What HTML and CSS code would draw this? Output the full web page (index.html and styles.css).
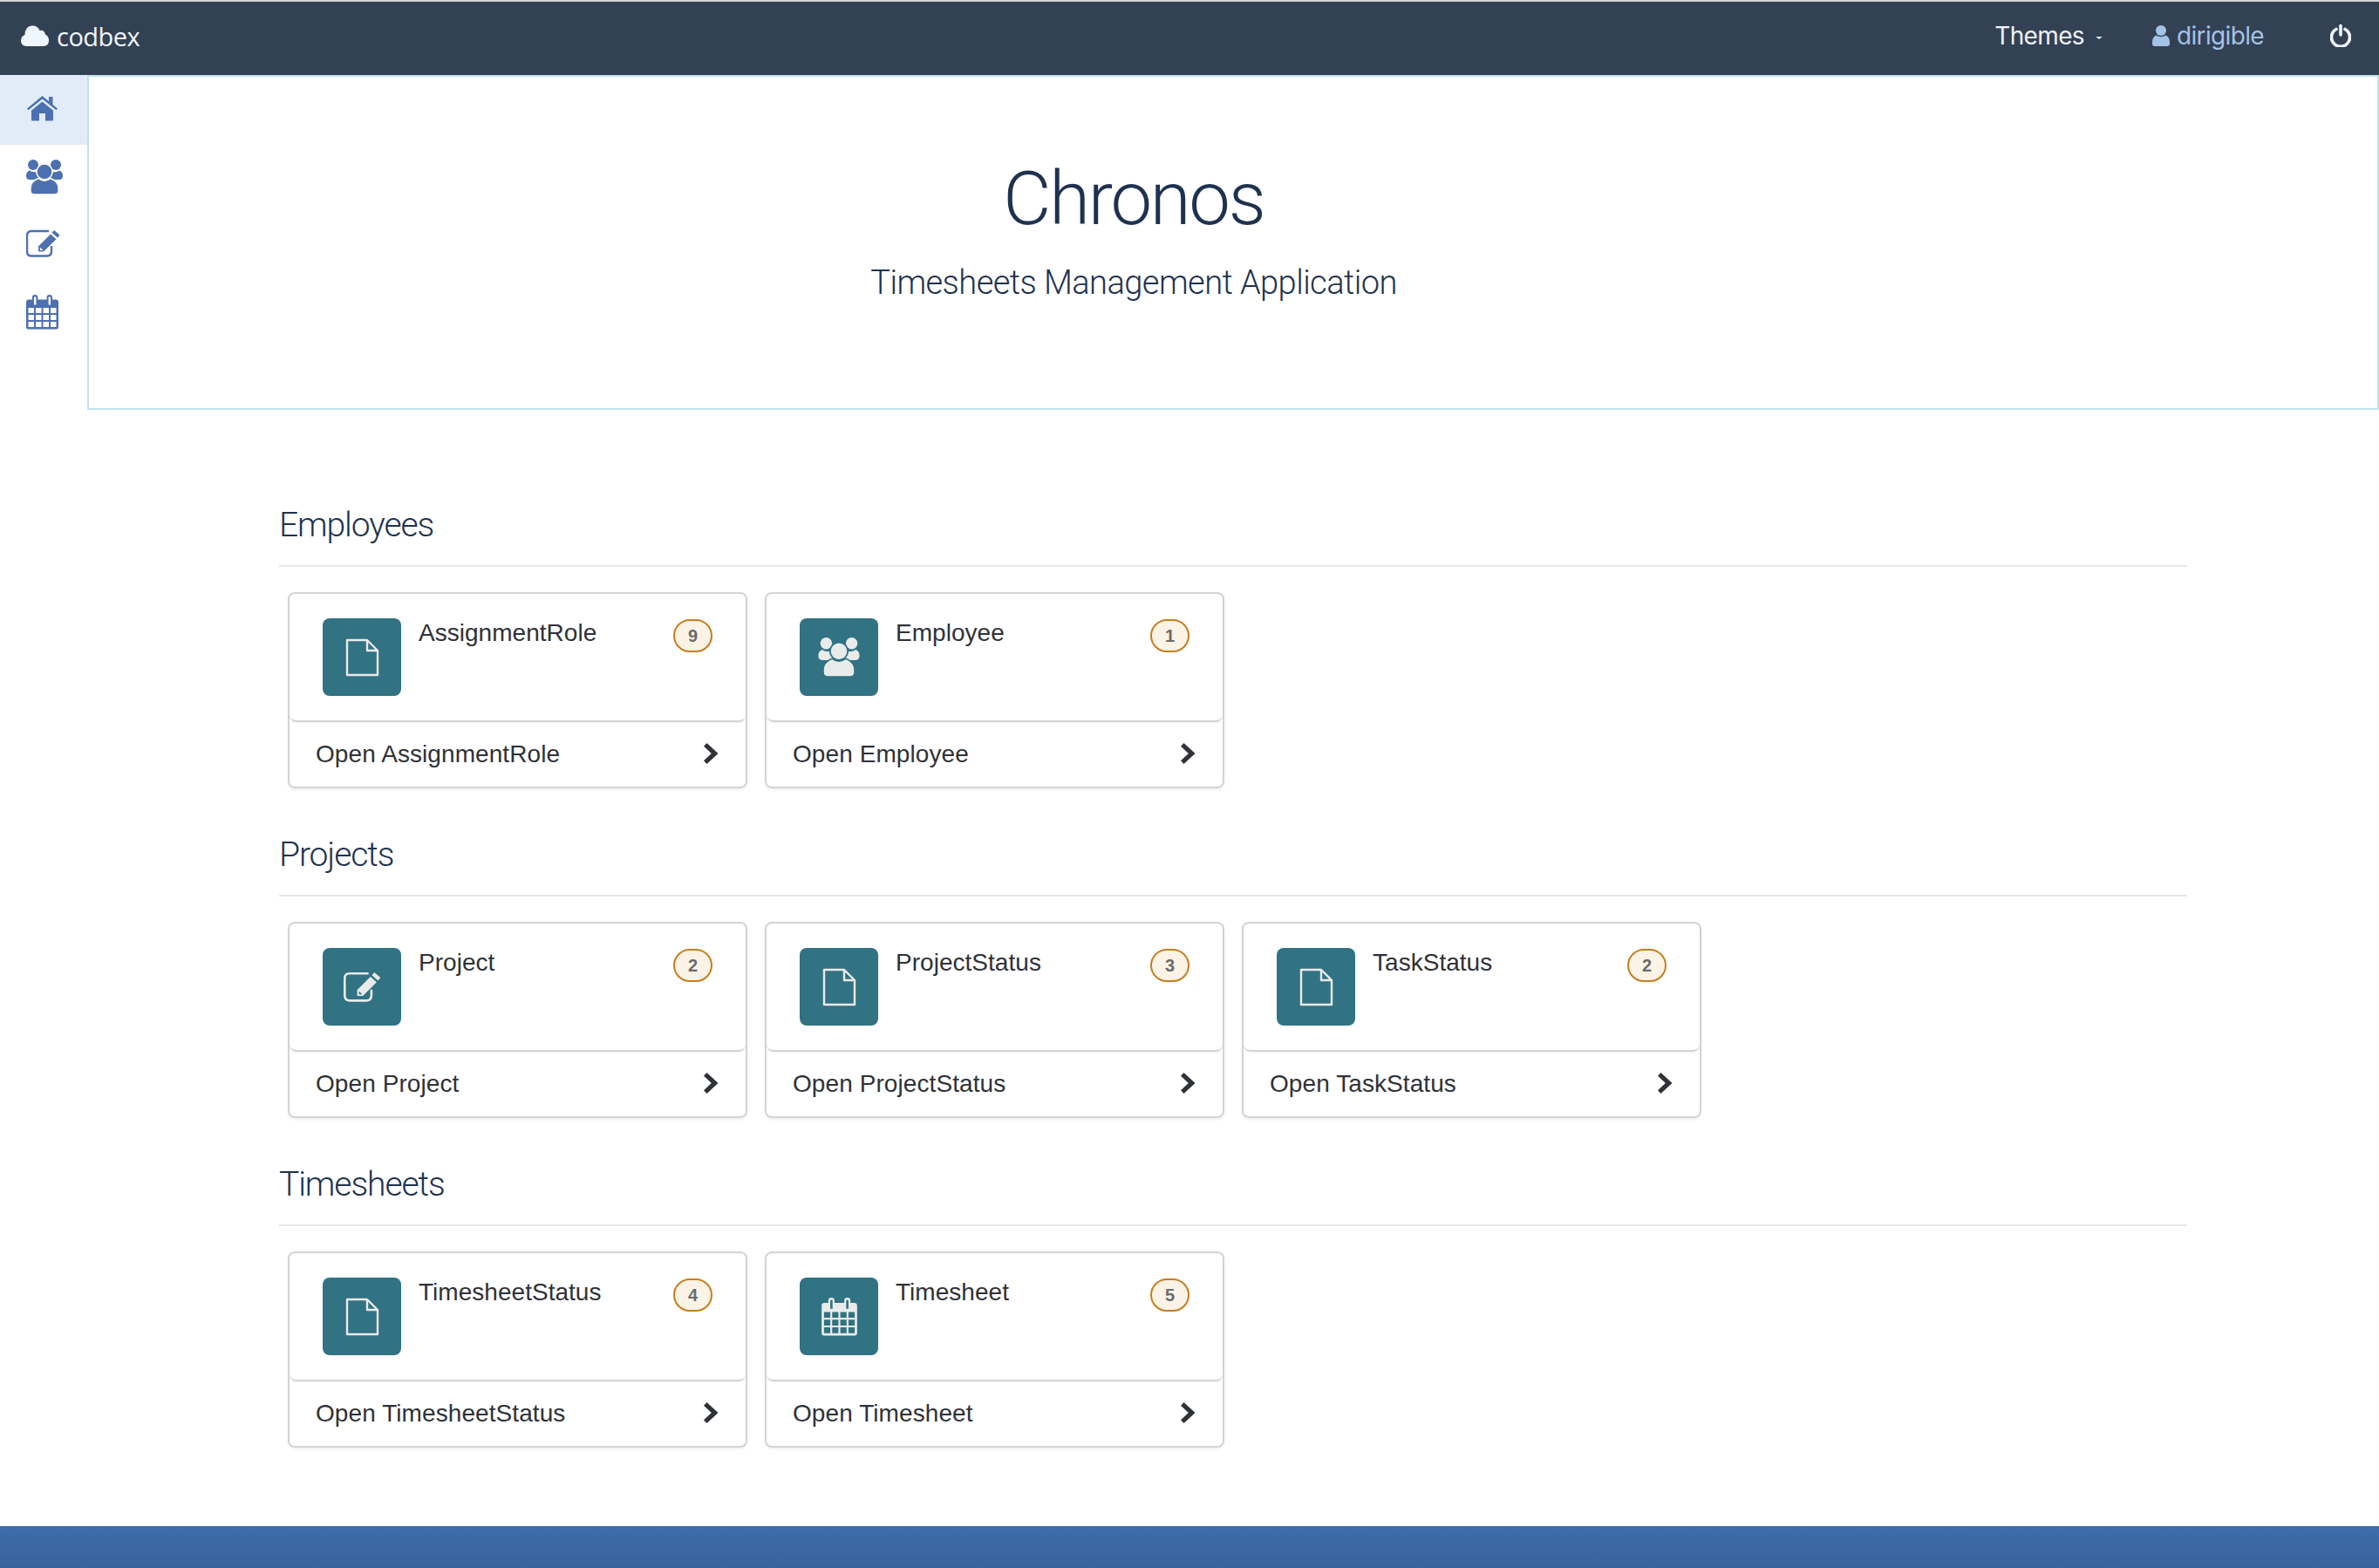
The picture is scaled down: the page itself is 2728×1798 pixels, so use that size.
FILE: index.html
```html
<!DOCTYPE html>
<html lang="en">
<head>
<meta charset="utf-8">
<title>Chronos</title>
<link rel="stylesheet" href="styles.css">
</head>
<body>
<svg class="defs" width="0" height="0" aria-hidden="true">
  <symbol id="i-home" viewBox="0 0 35 30">
    <path d="M0 14.5 17.5 0 25 6.2V1h4.5v9L35 14.5 33.5 16.3 17.5 3.4 1.5 16.3Z"/>
    <path d="M5 16.8 17.5 6.6 30 16.8V27.6Q30 28.6 29 28.6H21V20H14V28.6H6Q5 28.6 5 27.6Z"/>
  </symbol>
  <symbol id="i-users" viewBox="0 0 42 40">
    <circle cx="8" cy="6" r="6"/>
    <circle cx="34" cy="6" r="6"/>
    <path d="M4 12.5Q7 15 11 14 12 19 16 21.5 12 22.5 11 23H4Q0 23 0 18.5 0 14 4 12.5Z"/>
    <path d="M38 12.5Q35 15 31 14 30 19 26 21.5 30 22.5 31 23H38Q42 23 42 18.5 42 14 38 12.5Z"/>
    <circle class="ring" cx="21" cy="14" r="9"/>
    <path class="ring" d="M14 21.5Q21 27 28 21.5 37 25 37 33V36Q37 40 32 40H10Q5 40 5 36V33Q5 25 14 21.5Z"/>
  </symbol>
  <symbol id="i-edit" viewBox="0 0 39 32">
    <path class="line" d="M26 2H6Q1 2 1 7V25Q1 30.500 6 30.500H24Q29 30.500 29 25V19"/>
    <path d="M32 1 38.500 6.500 36 9.500 29.500 3.800Z"/>
    <path d="M28 5.500 34.500 11.200 20 25.500 14.200 25.500 14 19.500Z"/>
    <path class="cut" d="M15.800 20.500 19.500 24 16 24Z"/>
  </symbol>
  <symbol id="i-cal" viewBox="0 0 37 40">
    <path d="M3 5.500H7V2.800A3.200 2.800 0 0 1 13.400 2.800V5.500H23.600V2.800A3.200 2.800 0 0 1 30 2.800V5.500H34Q37 5.500 37 8.500V37Q37 39.500 34.500 39.500H2.500Q0 39.500 0 37V8.500Q0 5.500 3 5.500Z"/>
    <path class="cut" d="M9 2.500h2.400v9H9ZM25.600 2.500h2.400v9h-2.400Z"/>
    <path class="cut" d="M2.500 15h6.500v6h-6.500ZM11 15h6.500v6H11ZM19.500 15H26v6h-6.500ZM28 15h6.500v6H28ZM2.500 23h6.500v6h-6.500ZM11 23h6.500v6H11ZM19.500 23H26v6h-6.500ZM28 23h6.500v6H28ZM2.500 31h6.500v6h-6.500ZM11 31h6.500v6H11ZM19.500 31H26v6h-6.500ZM28 31h6.500v6H28Z"/>
  </symbol>
  <symbol id="i-file" viewBox="0 0 39 44">
    <path class="line" d="M2 2H25L37 14V42H2Z"/>
    <path class="line" d="M25 2V14H37"/>
  </symbol>
  <symbol id="i-chev" viewBox="0 0 17 24">
    <path d="M3.500 0 16.500 12 3.500 24 0 20.200 8.800 12 0 3.800Z"/>
  </symbol>
  <symbol id="i-cloud" viewBox="0 0 32 24">
    <path d="M6.500 24Q0 24 0 17.500 0 12.500 4.500 11 4.500 1 13 0.500 19 0 21.500 6 26.500 4.500 28 10.500 32 12.500 32 17.500 32 24 25.500 24Z"/>
  </symbol>
  <symbol id="i-user" viewBox="0 0 20 24">
    <circle cx="10" cy="6" r="6"/>
    <path d="M4.500 11.500Q10 15 15.500 11.500 20 13.500 20 19V21Q20 24 17 24H3Q0 24 0 21V19Q0 13.500 4.500 11.500Z"/>
  </symbol>
  <symbol id="i-power" viewBox="0 0 24 26">
    <path class="thick" d="M7 5.500A10.500 10.500 0 1 0 17 5.500"/>
    <path class="thick" d="M12 1.500V12"/>
  </symbol>
</svg>

<div class="app">
  <header class="navbar">
    <a class="brand"><svg class="brand-icon"><use href="#i-cloud"/></svg>codbex</a>
    <nav class="nav-right">
      <a class="nav-link themes">Themes<span class="caret"></span></a>
      <a class="nav-link user"><svg class="user-icon"><use href="#i-user"/></svg>dirigible</a>
      <a class="nav-link power"><svg class="power-icon"><use href="#i-power"/></svg></a>
    </nav>
  </header>

  <div class="top">
    <aside class="sidebar">
      <a class="side-item active"><svg class="s-home"><use href="#i-home"/></svg></a>
      <a class="side-item"><svg class="s-users"><use href="#i-users"/></svg></a>
      <a class="side-item"><svg class="s-edit"><use href="#i-edit"/></svg></a>
      <a class="side-item"><svg class="s-cal"><use href="#i-cal"/></svg></a>
    </aside>
    <section class="hero">
      <h1>Chronos</h1>
      <p>Timesheets Management Application</p>
    </section>
  </div>

  <main class="content">
    <section class="group">
      <h2>Employees</h2>
      <div class="cards">
        <article class="card">
          <div class="card-head">
            <div class="tile"><svg class="t-file"><use href="#i-file"/></svg></div>
            <span class="card-title">AssignmentRole</span>
            <span class="badge">9</span>
          </div>
          <a class="card-foot"><span>Open AssignmentRole</span><svg class="chev"><use href="#i-chev"/></svg></a>
        </article>
        <article class="card">
          <div class="card-head">
            <div class="tile"><svg class="t-users"><use href="#i-users"/></svg></div>
            <span class="card-title">Employee</span>
            <span class="badge">1</span>
          </div>
          <a class="card-foot"><span>Open Employee</span><svg class="chev"><use href="#i-chev"/></svg></a>
        </article>
      </div>
    </section>

    <section class="group">
      <h2>Projects</h2>
      <div class="cards">
        <article class="card">
          <div class="card-head">
            <div class="tile"><svg class="t-edit"><use href="#i-edit"/></svg></div>
            <span class="card-title">Project</span>
            <span class="badge">2</span>
          </div>
          <a class="card-foot"><span>Open Project</span><svg class="chev"><use href="#i-chev"/></svg></a>
        </article>
        <article class="card">
          <div class="card-head">
            <div class="tile"><svg class="t-file"><use href="#i-file"/></svg></div>
            <span class="card-title">ProjectStatus</span>
            <span class="badge">3</span>
          </div>
          <a class="card-foot"><span>Open ProjectStatus</span><svg class="chev"><use href="#i-chev"/></svg></a>
        </article>
        <article class="card">
          <div class="card-head">
            <div class="tile"><svg class="t-file"><use href="#i-file"/></svg></div>
            <span class="card-title">TaskStatus</span>
            <span class="badge">2</span>
          </div>
          <a class="card-foot"><span>Open TaskStatus</span><svg class="chev"><use href="#i-chev"/></svg></a>
        </article>
      </div>
    </section>

    <section class="group">
      <h2>Timesheets</h2>
      <div class="cards">
        <article class="card">
          <div class="card-head">
            <div class="tile"><svg class="t-file"><use href="#i-file"/></svg></div>
            <span class="card-title">TimesheetStatus</span>
            <span class="badge">4</span>
          </div>
          <a class="card-foot"><span>Open TimesheetStatus</span><svg class="chev"><use href="#i-chev"/></svg></a>
        </article>
        <article class="card">
          <div class="card-head">
            <div class="tile"><svg class="t-cal"><use href="#i-cal"/></svg></div>
            <span class="card-title">Timesheet</span>
            <span class="badge">5</span>
          </div>
          <a class="card-foot"><span>Open Timesheet</span><svg class="chev"><use href="#i-chev"/></svg></a>
        </article>
      </div>
    </section>
  </main>

  <footer class="footer"></footer>
</div>
</body>
</html>
```

FILE: styles.css
```css
* { box-sizing: border-box; }
html, body { margin: 0; height: 100%; background: #fff; }
body { font-family: "Liberation Sans", Arial, sans-serif; color: #2f3237; overflow: hidden; }
.defs { position: absolute; }
svg { fill: currentColor; display: block; }
.ring { stroke: var(--bg); stroke-width: 1.4; }
.cut { fill: var(--bg); }
.line { fill: none; stroke: currentColor; stroke-width: 2.4; stroke-linejoin: round; }
.thick { fill: none; stroke: currentColor; stroke-width: 3.6; stroke-linecap: round; }

.app { height: 100vh; display: flex; flex-direction: column; }

.navbar {
  height: 86px; flex: none;
  background: #334155; border-top: 2px solid #d3d4d6;
  display: flex; align-items: center; justify-content: space-between;
  padding: 0 32px 6px 24px;
}
.brand { display: flex; align-items: center; color: #f0f6fd; font: 400 29px "Open Sans", sans-serif; letter-spacing: -0.5px; }
.brand-icon { width: 32px; height: 24px; margin-right: 9px; }
.nav-right { display: flex; align-items: center; }
.nav-link { display: flex; align-items: center; font: 400 28px Inter, sans-serif; letter-spacing: -0.65px; }
.themes { color: #eef4fb; }
.caret { width: 0; height: 0; margin: 4px 0 0 13px; border-left: 4px solid transparent; border-right: 4px solid transparent; border-top: 3px solid #dfe7f1; }
.user { color: #a4c2e4; margin-left: 57px; }
.user-icon { width: 20px; height: 24px; margin-right: 8px; }
.power { color: #f0f6fd; margin-left: 76px; }
.power-icon { width: 24px; height: 26px; }

.top { display: flex; height: 384px; flex: none; }
.sidebar { width: 100px; flex: none; color: #4c70b0; --bg: #fff; display: flex; flex-direction: column; }
.side-item { height: 78px; display: flex; align-items: center; padding-left: 30px; }
.side-item.active { background: #e1ecf8; --bg: #e1ecf8; height: 80px; padding-left: 31px; }
.s-home { width: 35px; height: 30px; margin-bottom: 2px; }
.s-users { width: 42px; height: 40px; margin-bottom: 4px; }
.s-edit { width: 39px; height: 32px; margin-bottom: 9px; }
.s-cal { width: 37px; height: 40px; margin-bottom: 6px; }

.hero {
  flex: 1; border: 2px solid #bfe3ee; text-align: center; color: #1e3250;
  padding: 98px 228px 0 0; display: flex; flex-direction: column; align-items: center;
}
.hero h1 { margin: 0; font: 300 85px/1 Roboto, sans-serif; letter-spacing: -2.2px; }
.hero p { margin: 34px 0 0; font: 300 38px/1 Roboto, sans-serif; letter-spacing: -0.55px; }

.content { flex: 1; padding: 107px 220px 0 320px; }
.group { margin-bottom: 51px; }
.group h2 {
  margin: 0 0 29px; height: 73px; padding-bottom: 21px; line-height: 51px;
  font-family: Roboto, sans-serif; font-weight: 300; font-size: 39px; letter-spacing: -1.1px;
  color: #1e3250; border-bottom: 2px solid #e6e7e9;
}
.cards { display: flex; gap: 20px; padding-left: 10px; }
.card {
  width: 527px; height: 225px;
  border: 2px solid #d4d4d4; border-radius: 8px;
  box-shadow: 0 2px 3px rgba(0,0,0,.06);
  display: flex; flex-direction: column;
}
.card-head {
  height: 147px; flex: none; padding: 28px 38px 0 38px; margin: 0;
  display: flex; align-items: flex-start;
  border-bottom: 2px solid #d4d4d4; border-radius: 0 0 8px 8px;
  box-shadow: 0 1px 2px rgba(0,0,0,.06);
}
.tile {
  width: 90px; height: 89px; flex: none; background: #317283; border-radius: 8px;
  color: #e9ebeb; --bg: #317283;
  display: flex; align-items: center; justify-content: center;
}
.t-file { width: 39px; height: 44px; }
.t-users { width: 48px; height: 45px; }
.t-edit { width: 45px; height: 35px; }
.t-cal { width: 41px; height: 44px; }
.card-title { flex: 1; margin: 0 0 0 20px; font-size: 28px; line-height: 34px; letter-spacing: 0.03px; }
.badge {
  flex: none; width: 45px; height: 38px; margin-top: 1px;
  display: flex; align-items: center; justify-content: center;
  background: #faf3e6; border: 2px solid #c77e1e; border-radius: 19px;
  color: #6b6b6b; font-size: 20px; font-weight: 700;
}
.card-foot {
  flex: 1; display: flex; align-items: center; justify-content: space-between;
  padding: 0 31px 0 30px; font-size: 28px; letter-spacing: 0.08px;
}
.chev { width: 17px; height: 24px; color: #2f3237; margin-bottom: 2px; }

.footer { height: 48px; flex: none; background: linear-gradient(#3f6cab, #38629c); }
```
